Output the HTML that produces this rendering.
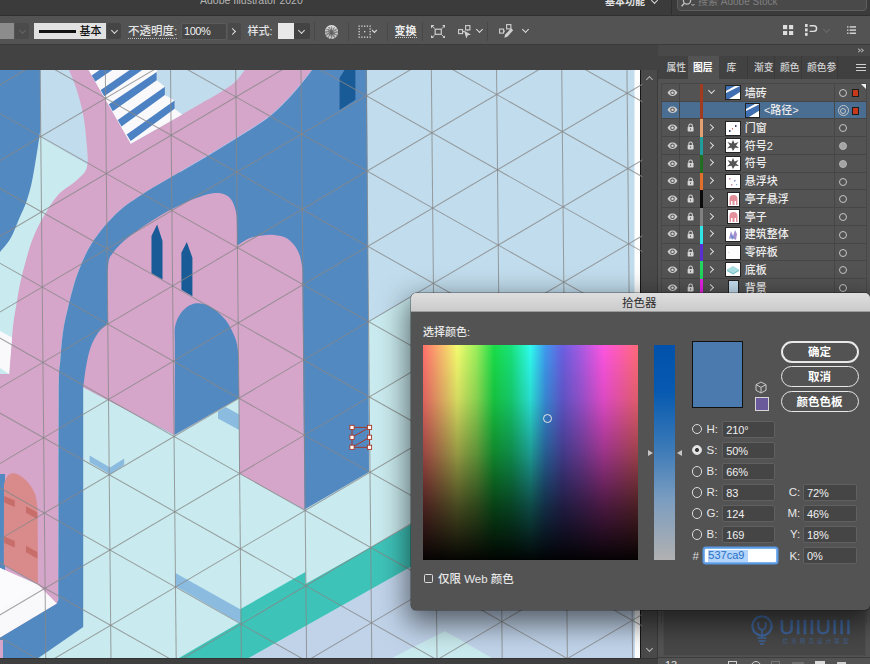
<!DOCTYPE html><html lang="zh"><head><meta charset="utf-8"><title>拾色器</title><style>
*{box-sizing:border-box}
html,body{margin:0;padding:0}
body{width:870px;height:664px;overflow:hidden;position:relative;background:#535353;font-family:"Liberation Sans", "Noto Sans CJK SC", sans-serif;font-size:11px;color:#e6e6e6}
.abs{position:absolute}
.t{position:absolute;white-space:nowrap;line-height:1}
#title{left:0;top:0;width:870px;height:16px;background:#3b3b3b;border-bottom:1px solid #303030;overflow:hidden}
#ctrl{left:0;top:16px;width:870px;height:28px;background:#535353}
#tabs{left:0;top:44px;width:870px;height:26px;background:#424242;border-top:1px solid #3a3a3a}
.sep{position:absolute;top:21px;width:1px;height:19px;background:#484848}
.dd{position:absolute;background:#454545;border-radius:2px}
.chev{position:absolute;width:5px;height:5px;border-right:1.3px solid #ddd;border-bottom:1.3px solid #ddd;transform:rotate(45deg)}
.chevr{position:absolute;width:5px;height:5px;border-right:1.3px solid #ddd;border-top:1.3px solid #ddd;transform:rotate(45deg)}
#panel{left:658px;top:44px;width:212px;height:620px;background:#535353}
.row{position:absolute;left:4.4px;width:204px;height:17.73px;border-bottom:1px solid #464646}
.row .nm{position:absolute;top:2.5px;font-size:11px;line-height:13px;color:#ececec;white-space:nowrap;font-weight:500}
.cbar{position:absolute;left:37.8px;top:0;width:3.1px;height:17.73px}
.thumb{position:absolute;top:1.2px;width:15.5px;height:15px;background:#fff;border:1px solid #222;overflow:hidden}
.circ{position:absolute;left:177px;top:5px;width:8px;height:8px;border:1px solid #c6c6c6;border-radius:50%}
#dlg{left:410.5px;top:293px;width:459px;height:316.5px;background:#535353;border-radius:5px;box-shadow:0 10px 28px 4px rgba(0,0,0,.55),0 0 0 .5px rgba(0,0,0,.5);overflow:hidden}
#dlgt{left:0;top:0;width:100%;height:18.5px;background:linear-gradient(#dedede,#cbcbcb);border-bottom:1px solid #9c9c9c}
.inp{position:absolute;background:#454545;border:1px solid #606060;border-radius:2px;height:16.5px}
.inp span{position:absolute;left:3.2px;top:1.5px;font-size:11px;letter-spacing:-.1px;line-height:12px;color:#f0f0f0}
.lab{position:absolute;font-size:11.5px;line-height:12px;color:#e8e8e8;white-space:nowrap;font-weight:500}
.radio{position:absolute;width:10.5px;height:10.5px;border-radius:50%;border:1.2px solid #dcdcdc}
.btn{position:absolute;left:370px;width:78px;height:22px;border-radius:11px;border:1.2px solid #e8e8e8;color:#fff;font-weight:bold;font-size:11.5px;line-height:19px;text-align:center}
</style></head><body><div id="title" class="abs"><div class="t" style="left:200px;top:-5.5px;font-size:10.5px;color:#b4b4b4">Adobe Illustrator 2020</div><div class="t" style="left:605px;top:-3.500px;font-size:10px;color:#e2e2e2;font-weight:bold">基本功能</div><div class="chev" style="left:652px;top:-2.5px"></div><div class="abs" style="left:670.5px;top:0;width:1px;height:15px;background:#2f2f2f"></div><div class="abs" style="left:676.7px;top:-10px;width:190px;height:20.5px;background:#494949;border:1px solid #5e5e5e;border-radius:4px"></div><svg class="abs" style="left:680px;top:-3.500px" width="16" height="12" viewBox="0 0 16 12"><circle cx="7" cy="3.5" r="3.6" fill="none" stroke="#bdbdbd" stroke-width="1.3"/><path d="M4.4,6.2 L1.5,9.3" stroke="#bdbdbd" stroke-width="1.5"/><path d="M11.5,7 l1.5,1.6 l1.5,-1.6" fill="none" stroke="#bdbdbd" stroke-width="1"/></svg><div class="t" style="left:698px;top:-3px;font-size:10px;color:#808080">搜索 Adobe Stock</div></div><div id="ctrl" class="abs"><div class="abs" style="left:0;top:1px;width:870px;height:27px"><div class="abs" style="left:0;top:6px;width:13.5px;height:16px;background:#8c8c8c"></div><div class="dd" style="left:15px;top:6px;width:14px;height:16px;background:#4b4b4b"></div><div class="chev" style="left:19.5px;top:10.5px;border-color:#666"></div><div class="abs" style="left:33.5px;top:6.3px;width:72.5px;height:16px;background:#e1e1e1"></div><div class="abs" style="left:38.5px;top:13.3px;width:37px;height:2.6px;background:#111"></div><div class="t" style="left:79.500px;top:8.5px;font-size:11px;font-weight:500;color:#111">基本</div><div class="dd" style="left:107px;top:6.3px;width:14px;height:16px"></div><div class="chev" style="left:111.5px;top:10.5px"></div><div class="t" style="left:128px;top:9px;font-size:11.5px;font-weight:500;color:#e4e4e4;border-bottom:1px dotted #bbb;padding-bottom:.5px">不透明度:</div><div class="dd" style="left:180.500px;top:6px;width:46px;height:17px;background:#464646;border:1px solid #5b5b5b"></div><div class="t" style="left:184px;top:8.500px;font-size:11px;color:#f0f0f0;letter-spacing:-.45px">100%</div><div class="dd" style="left:227.5px;top:6px;width:13.5px;height:17px;background:#494949"></div><div class="chevr" style="left:229.5px;top:11.5px"></div><div class="t" style="left:247.500px;top:8.500px;font-size:11px;font-weight:500;color:#e4e4e4">样式:</div><div class="abs" style="left:277.5px;top:6.3px;width:16px;height:16px;background:#e8e8e8"></div><div class="dd" style="left:294px;top:6.3px;width:15.500px;height:16px;background:#434343"></div><div class="chev" style="left:298.500px;top:10.5px"></div><div class="sep" style="left:314px;top:5px"></div><div class="sep" style="left:347.5px;top:5px"></div><div class="sep" style="left:387px;top:5px"></div><div class="sep" style="left:422px;top:5px"></div><div class="sep" style="left:487px;top:5px"></div><div class="abs" style="left:324.5px;top:8.200px;width:13.600px;height:13.600px;border-radius:50%;background:radial-gradient(circle at 50% 55%,rgba(90,90,90,.85) 0 1.5px,rgba(110,110,110,.35) 3.500px,rgba(220,220,220,.15) 6px,rgba(235,235,235,.9) 6.800px),repeating-conic-gradient(from 10deg,#cfcfcf 0 14deg,#8b8b8b 14deg 30deg)"></div><svg class="abs" style="left:357.5px;top:8px" width="22" height="13" viewBox="0 0 22 13"><g fill="#d8d8d8"><rect x="0.5" y="0.5" width="1.3" height="1.3"/><rect x="0.5" y="3.25" width="1.3" height="1.3"/><rect x="0.5" y="6" width="1.3" height="1.3"/><rect x="0.5" y="8.75" width="1.3" height="1.3"/><rect x="0.5" y="11.5" width="1.3" height="1.3"/><rect x="3.25" y="0.5" width="1.3" height="1.3"/><rect x="3.25" y="11.5" width="1.3" height="1.3"/><rect x="6" y="0.5" width="1.3" height="1.3"/><rect x="6" y="6" width="1.3" height="1.3"/><rect x="6" y="11.5" width="1.3" height="1.3"/><rect x="8.75" y="0.5" width="1.3" height="1.3"/><rect x="8.75" y="11.5" width="1.3" height="1.3"/><rect x="11.5" y="0.5" width="1.3" height="1.3"/><rect x="11.5" y="3.25" width="1.3" height="1.3"/><rect x="11.5" y="6" width="1.3" height="1.3"/><rect x="11.5" y="8.75" width="1.3" height="1.3"/><rect x="11.5" y="11.5" width="1.3" height="1.3"/></g><path d="M14,5 l2.4,2.500 l2.400,-2.500" fill="none" stroke="#d8d8d8" stroke-width="1.1"/></svg><div class="t" style="left:394.5px;top:9px;font-size:11px;color:#ececec;font-weight:bold;border-bottom:1px dotted #ccc;padding-bottom:0">变换</div><svg class="abs" style="left:430.500px;top:7.500px" width="14.500" height="13.500" viewBox="0 0 14.500 13.500"><g fill="none" stroke="#cfcfcf" stroke-width="1.2"><rect x="4.200" y="4.200" width="6.100" height="5.100"/><path d="M1,1 L3.600,3.400 M13.500,1 L10.900,3.400 M1,12.500 L3.600,10.100 M13.500,12.500 L10.900,10.100" stroke-width="1"/></g><g fill="#cfcfcf"><path d="M0,0 H3.400 L0,3.400 Z M14.500,0 V3.400 L11.100,0 Z M0,13.500 V10.100 L3.400,13.500 Z M14.500,13.500 H11.100 L14.500,10.100 Z"/></g></svg><svg class="abs" style="left:457.5px;top:7.500px" width="15" height="14" viewBox="0 0 15 14"><g fill="none" stroke="#cfcfcf" stroke-width="1.1"><rect x="0.600" y="4.600" width="4" height="4"/><rect x="7.600" y="0.600" width="4.300" height="4.300"/><path d="M4.600,6.600 H6.500 M9.700,5 V6"/></g><path d="M6,5.500 L13,9.800 L9.800,10.300 L8.300,13.400 Z" fill="#cfcfcf"/></svg><div class="chev" style="left:476.5px;top:10px"></div><svg class="abs" style="left:499px;top:7px" width="15" height="15" viewBox="0 0 15 15"><g fill="none" stroke="#cfcfcf" stroke-width="1.1"><rect x="0.600" y="5.100" width="4" height="4"/><rect x="7.600" y="0.600" width="4.300" height="4.300"/><path d="M4.600,7.100 H6"/></g><path d="M5.300,13.800 L6.200,10.600 L12,4.300 L14.200,6.300 L8.400,12.700 Z" fill="#cfcfcf"/></svg><div class="chev" style="left:522.5px;top:10px"></div><svg class="abs" style="left:783.300px;top:7.800px" width="10.700" height="10.700" viewBox="0 0 11 11"><g fill="#dedede"><rect x="0" y="0" width="4.300" height="4.300"/><rect x="6.200" y="0" width="4.300" height="4.300"/><rect x="0" y="6.200" width="4.300" height="4.300"/><rect x="6.200" y="6.200" width="4.300" height="4.300"/></g></svg><svg class="abs" style="left:804.800px;top:7.200px" width="13" height="12" viewBox="0 0 14 13"><g fill="#dedede"><rect x="0" y="0" width="2.800" height="3.200"/><rect x="0" y="4.800" width="2.800" height="3.200"/><rect x="0" y="9.600" width="2.800" height="3.200"/></g><path d="M5,2 H9.500 A2.800,2.800 0 0 1 9.500,8 H5" fill="none" stroke="#dedede" stroke-width="1.600"/></svg><div class="chev" style="left:823.5px;top:9.500px;border-color:#6c6c6c"></div><svg class="abs" style="left:846.500px;top:9.200px" width="9.500" height="8.500" viewBox="0 0 11 10"><g fill="#dedede"><rect x="0" y="0.300" width="1.600" height="1.600"/><rect x="3" y="0.300" width="8" height="1.600"/><rect x="0" y="4" width="1.600" height="1.600"/><rect x="3" y="4" width="8" height="1.600"/><rect x="0" y="7.700" width="1.600" height="1.600"/><rect x="3" y="7.700" width="8" height="1.600"/></g></svg></div></div><div id="tabs" class="abs"></div><div class="abs" style="left:640px;top:70px;width:18.500px;height:588px;background:#4a4a4a;border-left:1.500px solid #161616;border-right:2.500px solid #3b3b3b"></div><div class="chev" style="left:647px;top:76.500px;transform:rotate(-135deg);border-color:#b0b0b0"></div><div class="chev" style="left:647px;top:645.500px;border-color:#bdbdbd"></div><svg class="abs" style="left:0;top:0" width="870" height="664" viewBox="0 0 870 664"><defs><clipPath id="cv"><rect x="0" y="70" width="642.500" height="588"/></clipPath><clipPath id="gridclip"><rect x="-20" y="60" width="663" height="610"/></clipPath></defs><g clip-path="url(#cv)"><rect x="0" y="70" width="635" height="588" fill="#c1dcec"/>
<rect x="634.5" y="70" width="5.5" height="588" fill="#fdfdfd"/>
<polygon points="0.0,114.0 87.0,164.5 83.0,380.0 367.5,380.0 367.5,322.8 412.0,297.0 412.0,300.0 634.5,300.0 634.5,658.0 0.0,658.0" fill="#c9eaee" />
<polygon points="248.7,658.0 634.5,441.0 634.5,658.0" fill="#c0d3e9" />
<polygon points="392.0,658.0 445.0,631.0 492.0,658.0" fill="#c9eaee" />
<polygon points="179.0,658.0 305.5,584.0 410.5,524.7 634.5,397.0 634.5,441.0 248.7,658.0" fill="#3ec3b9" />
<polygon points="240.2,609.2 305.5,572.0 305.5,585.0 240.2,622.5" fill="#3ec3b9" />
<polygon points="175.4,572.9 240.2,609.2 240.2,623.3 175.4,586.0" fill="#8bbce0" />
<path d="M0.0,70.0L40.3,70.0 L40.3,130.0 C39.9,132.7 39.3,137.9 38.0,146.0 C36.7,154.1 34.3,169.8 32.5,178.8 C30.7,187.8 29.2,193.3 27.0,200.0 C24.8,206.7 21.7,212.7 19.0,219.0 C16.3,225.3 14.0,232.5 10.8,238.0 C7.6,243.5 1.8,249.7 0.0,252.0 Z" fill="#5389c1"/>
<path d="M69.0,70.0 C70.2,73.1 74.0,81.3 76.3,88.4 C78.6,95.5 81.2,104.7 82.8,112.8 C84.4,120.9 85.3,128.1 86.0,137.0 C86.7,145.9 88.7,158.8 87.2,166.0 C85.7,173.2 81.9,175.2 77.0,180.0 C72.1,184.8 63.6,188.9 58.0,195.0 C52.4,201.1 47.7,209.5 43.5,216.7 C39.3,223.9 36.0,230.4 33.0,238.0 C30.0,245.6 27.7,254.3 25.5,262.0 C23.3,269.7 21.5,277.0 20.0,284.0 C18.5,291.0 17.6,297.6 16.5,304.0 C15.4,310.4 14.2,317.0 13.5,322.6 C12.8,328.2 12.6,331.5 12.0,337.7 C11.4,343.9 10.5,353.9 10.0,360.0 C9.5,366.1 9.2,371.7 9.0,374.0L0.0,374.0 L0.0,636.0 L58.4,636.0L58.4,600.0 C58.5,566.7 58.4,440.0 58.7,400.0 C59.0,360.0 59.5,371.7 60.3,360.0 C61.1,348.3 62.1,338.3 63.3,330.0 C64.5,321.7 66.1,316.2 67.5,310.0 C68.9,303.8 70.0,299.1 71.8,292.6 C73.6,286.1 75.2,279.3 78.6,271.0 C82.0,262.7 85.8,252.4 92.0,243.0 C98.2,233.6 107.4,222.3 115.6,214.3 C123.8,206.3 130.5,202.1 141.2,195.0 C151.9,187.9 169.0,178.4 179.8,172.0 C190.6,165.6 196.6,162.2 205.8,156.7 C215.0,151.2 224.7,145.3 235.0,138.8 C245.3,132.3 258.9,124.2 267.6,117.7 C276.3,111.2 281.6,105.2 287.0,99.8 C292.4,94.3 296.2,89.5 300.0,85.0 C303.8,80.5 307.9,75.0 310.0,72.5 C312.1,70.0 312.2,70.4 312.7,70.0L244.8,70.0 C243.2,72.0 239.3,78.0 235.0,81.9 C230.7,85.8 224.6,89.6 218.8,93.3 C213.0,97.0 206.1,100.5 200.0,104.0 C193.9,107.5 185.2,112.7 182.2,114.4L130.7,143.7 L100.0,70.0 Z" fill="#d5a6ca"/>
<path d="M312.7,70.0 C312.2,70.4 312.1,70.0 310.0,72.5 C307.9,75.0 303.8,80.5 300.0,85.0 C296.2,89.5 292.4,94.3 287.0,99.8 C281.6,105.2 276.3,111.2 267.6,117.7 C258.9,124.2 245.3,132.3 235.0,138.8 C224.7,145.3 215.0,151.2 205.8,156.7 C196.6,162.2 190.6,165.6 179.8,172.0 C169.0,178.4 151.9,187.9 141.2,195.0 C130.5,202.1 123.8,206.3 115.6,214.3 C107.4,222.3 98.2,233.6 92.0,243.0 C85.8,252.4 82.0,262.7 78.6,271.0 C75.2,279.3 73.6,286.1 71.8,292.6 C70.0,299.1 68.9,303.8 67.5,310.0 C66.1,316.2 64.5,321.7 63.3,330.0 C62.1,338.3 61.1,348.3 60.3,360.0 C59.5,371.7 59.0,360.0 58.7,400.0 C58.4,440.0 58.5,566.7 58.4,600.0L56.8,603.6 L0.0,637.4 L0.0,658.0 L38.4,658.0 L83.2,627.0 L83.2,387.0 L174.6,435.0 L304.5,509.5 L369.0,472.0 L367.0,70.0 Z" fill="#5389c1"/>
<path d="M310.0,72.5 C308.3,74.6 303.8,80.5 300.0,85.0 C296.2,89.5 292.4,94.3 287.0,99.8 C281.6,105.2 276.3,111.2 267.6,117.7 C258.9,124.2 245.3,132.3 235.0,138.8 C224.7,145.3 215.0,151.2 205.8,156.7 C196.6,162.2 184.1,169.4 179.8,172.0" fill="none" stroke="#bcc6ee" stroke-width="0.9" opacity="0.8"/>
<path d="M108.0,322.0 C108.0,313.0 107.2,279.6 108.0,268.0 C108.8,256.4 109.6,257.8 113.0,252.7 C116.4,247.6 121.6,242.9 128.4,237.3 C135.2,231.8 145.5,224.7 154.0,219.4 C162.5,214.1 171.1,209.4 179.6,205.3 C188.1,201.2 198.4,197.0 205.2,195.0 C212.0,193.0 216.3,192.7 220.6,193.3 C224.9,194.0 228.2,195.8 230.8,198.9 C233.4,202.0 235.0,207.5 236.0,212.0 C237.0,216.5 236.8,220.5 236.9,226.0 C237.1,231.5 236.9,241.8 236.9,245.0L237.3,245.6 C239.2,244.4 244.7,240.3 248.8,238.6 C252.9,236.9 257.8,236.2 262.0,235.6 C266.2,235.0 269.8,234.5 274.0,235.0 C278.2,235.5 283.3,236.1 287.2,238.6 C291.1,241.1 294.9,245.4 297.4,250.0 C299.9,254.6 301.2,260.2 302.0,266.0 C302.8,271.8 302.3,281.8 302.4,285.0L304.5,509.5 L239.2,473.5 L239.2,398.0 L174.6,435.0 L83.3,387.4 C83.7,384.1 84.7,374.4 85.9,367.8 C87.1,361.2 88.4,353.8 90.4,348.0 C92.4,342.2 95.2,337.0 98.0,333.0 C100.8,329.0 105.6,325.8 107.3,324.0 C109.0,322.2 107.9,322.3 108.0,322.0 Z" fill="#d5a6ca"/>
<path d="M174.6,435.0L174.9,340.0 C174.9,337.8 174.3,331.1 175.0,327.0 C175.7,322.9 177.3,318.8 179.3,315.5 C181.3,312.2 184.1,309.0 187.0,307.0 C189.9,305.0 193.2,303.4 197.0,303.3 C200.8,303.2 205.2,303.7 210.0,306.5 C214.8,309.3 221.3,314.4 225.6,320.0 C229.9,325.6 233.8,333.7 235.9,340.0 C238.0,346.3 237.9,352.2 238.4,358.0 C238.9,363.8 238.6,372.2 238.7,375.0L239.2,398.0 Z" fill="#5389c1"/>
<polygon points="174.6,435.0 239.2,398.0 239.2,474.0 174.6,438.0" fill="#c9eaee" />
<polygon points="339.6,78.0 344.5,70.0 355.4,70.0 355.4,99.7 339.6,110.0" fill="#195b96" />
<polygon points="157.1,224.5 162.5,241.0 162.5,279.6 151.5,273.2 151.5,236.0" fill="#195b96" />
<polygon points="186.8,241.9 192.4,257.8 192.4,296.2 181.4,289.8 181.4,252.7" fill="#195b96" />
<polygon points="88.5,70.0 157.0,70.0 156.7,80.3 164.9,86.8 164.9,94.9 174.6,100.6 174.6,108.7 182.2,114.4 130.7,143.7" fill="#f9f9fc" />
<polygon points="91.7,75.4 99.5,70.0 112.2,70.0 95.4,81.6" fill="#4c82c3" />
<polygon points="100.7,90.0 129.7,70.0 142.2,70.0 104.2,96.2" fill="#4c82c3" />
<polygon points="108.8,104.3 156.7,72.1 156.7,80.3 112.8,111.2" fill="#4c82c3" />
<polygon points="117.7,120.1 164.9,86.8 164.9,94.9 121.5,126.6" fill="#4c82c3" />
<polygon points="126.7,134.6 174.6,100.6 174.6,108.7 130.7,141.0" fill="#4c82c3" />
<polygon points="0.0,331.0 12.0,337.5 9.2,374.0 0.0,368.0" fill="#f9f9fc" />
<polygon points="89.6,455.5 110.0,467.5 124.2,458.5 124.2,465.0 110.0,474.3 89.6,462.3" fill="#8bbce0" />
<polygon points="218.0,411.5 225.6,407.0 239.2,414.5 239.2,430.0 218.0,418.4" fill="#8bbce0" />
<rect x="0" y="474" width="5" height="100" fill="#5389c1"/>
<path d="M3.8,564.4L4.0,495.0 C4.1,492.8 3.5,485.5 4.5,482.0 C5.5,478.5 7.8,475.2 10.0,474.0 C12.2,472.8 15.0,473.1 18.0,474.5 C21.0,475.9 25.2,479.1 28.0,482.4 C30.8,485.6 33.4,489.7 35.0,494.0 C36.6,498.3 37.2,505.7 37.6,508.0L37.9,583.6 Z" fill="#d98b8c"/>
<polygon points="4.2,496.0 14.8,500.6 14.8,507.1 4.2,502.5" fill="#c86e6a" />
<polygon points="26.0,506.3 37.3,512.5 37.3,519.0 26.0,512.8" fill="#c86e6a" />
<polygon points="4.2,536.5 14.8,541.0 14.8,547.5 4.2,543.0" fill="#c86e6a" />
<polygon points="26.0,545.8 37.3,552.0 37.3,558.5 26.0,552.3" fill="#c86e6a" />
<polygon points="0.0,568.0 38.0,584.5 56.8,603.6 0.0,637.4" fill="#f9f9fc" />
<polygon points="0.0,568.0 38.0,586.0 0.0,610.0" fill="#fbfbfd" />
<rect x="0" y="640" width="3" height="18" fill="#d5a6ca"/>
<g stroke="#878787" stroke-opacity=".78" stroke-width="1" fill="none" transform="rotate(-0.55 236 97)" clip-path="url(#gridclip)"><line x1="-24.80" y1="-50" x2="-24.80" y2="800"/><line x1="40.40" y1="-50" x2="40.40" y2="800"/><line x1="105.60" y1="-50" x2="105.60" y2="800"/><line x1="170.80" y1="-50" x2="170.80" y2="800"/><line x1="236.00" y1="-50" x2="236.00" y2="800"/><line x1="301.20" y1="-50" x2="301.20" y2="800"/><line x1="366.40" y1="-50" x2="366.40" y2="800"/><line x1="431.60" y1="-50" x2="431.60" y2="800"/><line x1="496.80" y1="-50" x2="496.80" y2="800"/><line x1="562.00" y1="-50" x2="562.00" y2="800"/><line x1="627.20" y1="-50" x2="627.20" y2="800"/><line x1="692.40" y1="-50" x2="692.40" y2="800"/><line x1="-300" y1="-1116.12" x2="700" y2="-538.66"/><line x1="-300" y1="-497.08" x2="700" y2="-1074.54"/><line x1="-300" y1="-1040.82" x2="700" y2="-463.36"/><line x1="-300" y1="-421.78" x2="700" y2="-999.24"/><line x1="-300" y1="-965.52" x2="700" y2="-388.06"/><line x1="-300" y1="-346.48" x2="700" y2="-923.94"/><line x1="-300" y1="-890.22" x2="700" y2="-312.76"/><line x1="-300" y1="-271.18" x2="700" y2="-848.64"/><line x1="-300" y1="-814.92" x2="700" y2="-237.46"/><line x1="-300" y1="-195.88" x2="700" y2="-773.34"/><line x1="-300" y1="-739.62" x2="700" y2="-162.16"/><line x1="-300" y1="-120.58" x2="700" y2="-698.04"/><line x1="-300" y1="-664.32" x2="700" y2="-86.86"/><line x1="-300" y1="-45.28" x2="700" y2="-622.74"/><line x1="-300" y1="-589.02" x2="700" y2="-11.56"/><line x1="-300" y1="30.02" x2="700" y2="-547.44"/><line x1="-300" y1="-513.72" x2="700" y2="63.74"/><line x1="-300" y1="105.32" x2="700" y2="-472.14"/><line x1="-300" y1="-438.42" x2="700" y2="139.04"/><line x1="-300" y1="180.62" x2="700" y2="-396.84"/><line x1="-300" y1="-363.12" x2="700" y2="214.34"/><line x1="-300" y1="255.92" x2="700" y2="-321.54"/><line x1="-300" y1="-287.82" x2="700" y2="289.64"/><line x1="-300" y1="331.22" x2="700" y2="-246.24"/><line x1="-300" y1="-212.52" x2="700" y2="364.94"/><line x1="-300" y1="406.52" x2="700" y2="-170.94"/><line x1="-300" y1="-137.22" x2="700" y2="440.24"/><line x1="-300" y1="481.82" x2="700" y2="-95.64"/><line x1="-300" y1="-61.92" x2="700" y2="515.54"/><line x1="-300" y1="557.12" x2="700" y2="-20.34"/><line x1="-300" y1="13.38" x2="700" y2="590.84"/><line x1="-300" y1="632.42" x2="700" y2="54.96"/><line x1="-300" y1="88.68" x2="700" y2="666.14"/><line x1="-300" y1="707.72" x2="700" y2="130.26"/><line x1="-300" y1="163.98" x2="700" y2="741.44"/><line x1="-300" y1="783.02" x2="700" y2="205.56"/><line x1="-300" y1="239.28" x2="700" y2="816.74"/><line x1="-300" y1="858.32" x2="700" y2="280.86"/><line x1="-300" y1="314.58" x2="700" y2="892.04"/><line x1="-300" y1="933.62" x2="700" y2="356.16"/><line x1="-300" y1="389.88" x2="700" y2="967.34"/><line x1="-300" y1="1008.92" x2="700" y2="431.46"/><line x1="-300" y1="465.18" x2="700" y2="1042.64"/><line x1="-300" y1="1084.22" x2="700" y2="506.76"/><line x1="-300" y1="540.48" x2="700" y2="1117.94"/><line x1="-300" y1="1159.52" x2="700" y2="582.06"/><line x1="-300" y1="615.78" x2="700" y2="1193.24"/><line x1="-300" y1="1234.82" x2="700" y2="657.36"/><line x1="-300" y1="691.08" x2="700" y2="1268.54"/><line x1="-300" y1="1310.12" x2="700" y2="732.66"/><line x1="-300" y1="766.38" x2="700" y2="1343.84"/><line x1="-300" y1="1385.42" x2="700" y2="807.96"/><line x1="-300" y1="841.68" x2="700" y2="1419.14"/><line x1="-300" y1="1460.72" x2="700" y2="883.26"/><line x1="-300" y1="916.98" x2="700" y2="1494.44"/><line x1="-300" y1="1536.02" x2="700" y2="958.56"/></g>
<g stroke="#a3392b" stroke-width="1" fill="none"><rect x="352" y="427.4" width="17.5" height="19.9"/><path d="M352,437.2 L369.5,427.4 M352,447.3 L369.5,437.4"/></g>
<rect x="349.9" y="425.3" width="4.2" height="4.2" fill="#fff" stroke="#a3392b" stroke-width=".9"/><rect x="349.9" y="435.2" width="4.2" height="4.2" fill="#fff" stroke="#a3392b" stroke-width=".9"/><rect x="349.9" y="445.2" width="4.2" height="4.2" fill="#fff" stroke="#a3392b" stroke-width=".9"/><rect x="367.4" y="425.3" width="4.2" height="4.2" fill="#fff" stroke="#a3392b" stroke-width=".9"/><rect x="367.4" y="435.2" width="4.2" height="4.2" fill="#fff" stroke="#a3392b" stroke-width=".9"/><rect x="367.4" y="445.2" width="4.2" height="4.2" fill="#fff" stroke="#a3392b" stroke-width=".9"/></g></svg><div class="abs" style="left:0;top:658px;width:658px;height:6px;background:#3f3f3f;border-top:1px solid #333"></div><div id="panel" class="abs"><div class="abs" style="left:0;top:0;width:212px;height:11.500px;background:#494949;border-top:1px solid #3a3a3a"></div><div class="chevr" style="left:198.500px;top:4.500px;width:3.200px;height:3.200px;border-width:1px;border-color:#b0b0b0"></div><div class="chevr" style="left:202px;top:4.500px;width:3.200px;height:3.200px;border-width:1px;border-color:#b0b0b0"></div><div class="abs" style="left:0;top:11.500px;width:212px;height:23.500px;background:#424242"></div><div class="abs" style="left:29.500px;top:11.500px;width:31px;height:23.500px;background:#535353"></div><div class="t" style="left:8.5px;top:19px;font-size:9.800px;color:#d2d2d2;font-weight:500;">属性</div><div class="t" style="left:35px;top:19px;font-size:9.800px;color:#fff;font-weight:bold;">图层</div><div class="t" style="left:68.5px;top:19px;font-size:9.800px;color:#d2d2d2;font-weight:500;">库</div><div class="t" style="left:96px;top:19px;font-size:9.800px;color:#d2d2d2;font-weight:500;">渐变</div><div class="t" style="left:122px;top:19px;font-size:9.800px;color:#d2d2d2;font-weight:500;">颜色</div><div class="t" style="left:149px;top:19px;font-size:9.800px;color:#d2d2d2;font-weight:500;">颜色参</div><div class="abs" style="left:89px;top:12px;width:1px;height:22.500px;background:#393939"></div><div class="abs" style="left:116px;top:12px;width:1px;height:22.500px;background:#393939"></div><div class="abs" style="left:143px;top:12px;width:1px;height:22.500px;background:#393939"></div><div class="abs" style="left:178.500px;top:12px;width:34px;height:22.500px;background:#404040;border-left:1px solid #393939"></div><div class="abs" style="left:198px;top:19.7px;width:9.5px;height:1.3px;background:#d0d0d0"></div><div class="abs" style="left:198px;top:22.9px;width:9.5px;height:1.3px;background:#d0d0d0"></div><div class="abs" style="left:198px;top:26.1px;width:9.5px;height:1.3px;background:#d0d0d0"></div><div class="abs" style="left:3.4px;top:39.0px;width:205.5px;height:540px;border:1px solid #484848;border-bottom:none"></div><div class="row" style="top:40.00px;"><svg class="abs" style="left:4.6px;top:4.6px" width="11" height="7.600" viewBox="0 0 13 9"><path d="M0.6,4.5 C2.6,1.2 4.6,0.7 6.5,0.7 C8.4,0.7 10.4,1.2 12.4,4.5 C10.4,7.8 8.4,8.3 6.5,8.3 C4.6,8.3 2.6,7.8 0.6,4.5 Z" fill="#cdcdcd"/><circle cx="6.5" cy="4.5" r="2.7" fill="#535353"/><circle cx="6.5" cy="4.5" r="1.5" fill="#d6d6d6"/></svg><div class="abs" style="left:17px;top:0;width:1px;height:17.73px;background:#454545"></div><div class="cbar" style="background:#a13a1f"></div><div class="chev" style="left:47px;top:3.5px;border-color:#dcdcdc"></div><div class="thumb" style="left:63px;width:15.5px"><svg width="14" height="13" viewBox="0 0 14 13"><rect width="14" height="13" fill="#fff"/><polygon points="0,13 0,7 14,0 14,6 3,13" fill="#3f6fb0"/><polygon points="0,0 9,0 0,5" fill="#3f6fb0"/></svg></div><div class="nm" style="left:82.3px">墙砖</div><div class="abs" style="left:171.5px;top:0;width:1px;height:17.73px;background:#474747"></div><div class="circ"></div><div class="abs" style="left:189.5px;top:5.2px;width:7.600px;height:7.600px;background:#c8381a;border:1px solid #1c1c1c"></div><div class="abs" style="left:199px;top:0;width:0;height:0;border-left:5px solid transparent;border-top:5px solid #f0f0f0"></div></div><div class="row" style="top:57.73px;background:#4a6d92;"><svg class="abs" style="left:4.6px;top:4.6px" width="11" height="7.600" viewBox="0 0 13 9"><path d="M0.6,4.5 C2.6,1.2 4.6,0.7 6.5,0.7 C8.4,0.7 10.4,1.2 12.4,4.5 C10.4,7.8 8.4,8.3 6.5,8.3 C4.6,8.3 2.6,7.8 0.6,4.5 Z" fill="#cdcdcd"/><circle cx="6.5" cy="4.5" r="2.7" fill="#535353"/><circle cx="6.5" cy="4.5" r="1.5" fill="#d6d6d6"/></svg><div class="abs" style="left:17px;top:0;width:1px;height:17.73px;background:#454545"></div><div class="cbar" style="background:#a13a1f"></div><div class="thumb" style="left:82.6px;width:15.5px"><svg width="14" height="13" viewBox="0 0 14 13"><rect width="14" height="13" fill="#fff"/><polygon points="0,13 0,7 14,0 14,6 3,13" fill="#3f6fb0"/><polygon points="0,0 9,0 0,5" fill="#3f6fb0"/></svg></div><div class="nm" style="left:101.5px">&lt;路径&gt;</div><div class="abs" style="left:171.5px;top:0;width:1px;height:17.73px;background:#474747"></div><div class="circ" style="left:175.500px;top:3.500px;width:11px;height:11px"></div><div class="circ" style="left:178px;top:6px;width:6px;height:6px"></div><div class="abs" style="left:189.5px;top:5.2px;width:7.600px;height:7.600px;background:#c8381a;border:1px solid #1c1c1c"></div></div><div class="row" style="top:75.46px;"><svg class="abs" style="left:4.6px;top:4.6px" width="11" height="7.600" viewBox="0 0 13 9"><path d="M0.6,4.5 C2.6,1.2 4.6,0.7 6.5,0.7 C8.4,0.7 10.4,1.2 12.4,4.5 C10.4,7.8 8.4,8.3 6.5,8.3 C4.6,8.3 2.6,7.8 0.6,4.5 Z" fill="#cdcdcd"/><circle cx="6.5" cy="4.5" r="2.7" fill="#535353"/><circle cx="6.5" cy="4.5" r="1.5" fill="#d6d6d6"/></svg><div class="abs" style="left:17px;top:0;width:1px;height:17.73px;background:#454545"></div><svg class="abs" style="left:24.6px;top:4px" width="7.200" height="9" viewBox="0 0 9 11"><path d="M2.3,5 V3.2 A2.2,2.2 0 0 1 6.7,3.2 V5" fill="none" stroke="#d6d6d6" stroke-width="1.3"/><rect x="0.8" y="4.8" width="7.4" height="5.6" rx="0.8" fill="#d6d6d6"/><rect x="4" y="6.5" width="1" height="2.2" fill="#535353"/></svg><div class="cbar" style="background:#e3a173"></div><div class="chevr" style="left:45.5px;top:5.5px;border-color:#dcdcdc"></div><div class="thumb" style="left:63px;width:15.5px"><svg width="14" height="13" viewBox="0 0 14 13"><rect width="14" height="13" fill="#fff"/><rect x="3" y="8" width="1.5" height="2" fill="#447"/><rect x="9" y="3" width="1.5" height="2" fill="#447"/><rect x="6" y="6" width="1" height="1.5" fill="#c66"/></svg></div><div class="nm" style="left:82.3px">门窗</div><div class="abs" style="left:171.5px;top:0;width:1px;height:17.73px;background:#474747"></div><div class="circ"></div></div><div class="row" style="top:93.19px;"><svg class="abs" style="left:4.6px;top:4.6px" width="11" height="7.600" viewBox="0 0 13 9"><path d="M0.6,4.5 C2.6,1.2 4.6,0.7 6.5,0.7 C8.4,0.7 10.4,1.2 12.4,4.5 C10.4,7.8 8.4,8.3 6.5,8.3 C4.6,8.3 2.6,7.8 0.6,4.5 Z" fill="#cdcdcd"/><circle cx="6.5" cy="4.5" r="2.7" fill="#535353"/><circle cx="6.5" cy="4.5" r="1.5" fill="#d6d6d6"/></svg><div class="abs" style="left:17px;top:0;width:1px;height:17.73px;background:#454545"></div><svg class="abs" style="left:24.6px;top:4px" width="7.200" height="9" viewBox="0 0 9 11"><path d="M2.3,5 V3.2 A2.2,2.2 0 0 1 6.7,3.2 V5" fill="none" stroke="#d6d6d6" stroke-width="1.3"/><rect x="0.8" y="4.8" width="7.4" height="5.6" rx="0.8" fill="#d6d6d6"/><rect x="4" y="6.5" width="1" height="2.2" fill="#535353"/></svg><div class="cbar" style="background:#1f9e9e"></div><div class="chevr" style="left:45.5px;top:5.5px;border-color:#dcdcdc"></div><div class="thumb" style="left:63px;width:15.5px"><svg width="14" height="13" viewBox="0 0 14 13"><rect width="14" height="13" fill="#fff"/><path d="M7,1 L8.5,4.5 L12.5,3 L10,6.5 L13,9 L9,8.8 L7,12 L5.4,8.8 L1,9.5 L4,6.5 L1.5,3 L5.5,4.5 Z" fill="#555"/></svg></div><div class="nm" style="left:82.3px">符号2</div><div class="abs" style="left:171.5px;top:0;width:1px;height:17.73px;background:#474747"></div><div class="circ" style="background:#a4a4a4;border-color:#b4b4b4"></div></div><div class="row" style="top:110.92px;"><svg class="abs" style="left:4.6px;top:4.6px" width="11" height="7.600" viewBox="0 0 13 9"><path d="M0.6,4.5 C2.6,1.2 4.6,0.7 6.5,0.7 C8.4,0.7 10.4,1.2 12.4,4.5 C10.4,7.8 8.4,8.3 6.5,8.3 C4.6,8.3 2.6,7.8 0.6,4.5 Z" fill="#cdcdcd"/><circle cx="6.5" cy="4.5" r="2.7" fill="#535353"/><circle cx="6.5" cy="4.5" r="1.5" fill="#d6d6d6"/></svg><div class="abs" style="left:17px;top:0;width:1px;height:17.73px;background:#454545"></div><svg class="abs" style="left:24.6px;top:4px" width="7.200" height="9" viewBox="0 0 9 11"><path d="M2.3,5 V3.2 A2.2,2.2 0 0 1 6.7,3.2 V5" fill="none" stroke="#d6d6d6" stroke-width="1.3"/><rect x="0.8" y="4.8" width="7.4" height="5.6" rx="0.8" fill="#d6d6d6"/><rect x="4" y="6.5" width="1" height="2.2" fill="#535353"/></svg><div class="cbar" style="background:#1f6e22"></div><div class="chevr" style="left:45.5px;top:5.5px;border-color:#dcdcdc"></div><div class="thumb" style="left:63px;width:15.5px"><svg width="14" height="13" viewBox="0 0 14 13"><rect width="14" height="13" fill="#fff"/><path d="M7,1 L8.5,4.5 L12.5,3 L10,6.5 L13,9 L9,8.8 L7,12 L5.4,8.8 L1,9.5 L4,6.5 L1.5,3 L5.5,4.5 Z" fill="#555"/></svg></div><div class="nm" style="left:82.3px">符号</div><div class="abs" style="left:171.5px;top:0;width:1px;height:17.73px;background:#474747"></div><div class="circ" style="background:#a4a4a4;border-color:#b4b4b4"></div></div><div class="row" style="top:128.65px;"><svg class="abs" style="left:4.6px;top:4.6px" width="11" height="7.600" viewBox="0 0 13 9"><path d="M0.6,4.5 C2.6,1.2 4.6,0.7 6.5,0.7 C8.4,0.7 10.4,1.2 12.4,4.5 C10.4,7.8 8.4,8.3 6.5,8.3 C4.6,8.3 2.6,7.8 0.6,4.5 Z" fill="#cdcdcd"/><circle cx="6.5" cy="4.5" r="2.7" fill="#535353"/><circle cx="6.5" cy="4.5" r="1.5" fill="#d6d6d6"/></svg><div class="abs" style="left:17px;top:0;width:1px;height:17.73px;background:#454545"></div><svg class="abs" style="left:24.6px;top:4px" width="7.200" height="9" viewBox="0 0 9 11"><path d="M2.3,5 V3.2 A2.2,2.2 0 0 1 6.7,3.2 V5" fill="none" stroke="#d6d6d6" stroke-width="1.3"/><rect x="0.8" y="4.8" width="7.4" height="5.6" rx="0.8" fill="#d6d6d6"/><rect x="4" y="6.5" width="1" height="2.2" fill="#535353"/></svg><div class="cbar" style="background:#e36f2c"></div><div class="chevr" style="left:45.5px;top:5.5px;border-color:#dcdcdc"></div><div class="thumb" style="left:63px;width:15.5px"><svg width="14" height="13" viewBox="0 0 14 13"><rect width="14" height="13" fill="#fff"/><rect x="3" y="3" width="1.5" height="1.5" fill="#c8a"/><rect x="8" y="5" width="1.5" height="1.5" fill="#88c"/><rect x="5" y="9" width="1.5" height="1.5" fill="#c8a"/><rect x="10" y="9" width="1.2" height="1.2" fill="#8ac"/></svg></div><div class="nm" style="left:82.3px">悬浮块</div><div class="abs" style="left:171.5px;top:0;width:1px;height:17.73px;background:#474747"></div><div class="circ"></div></div><div class="row" style="top:146.38px;"><svg class="abs" style="left:4.6px;top:4.6px" width="11" height="7.600" viewBox="0 0 13 9"><path d="M0.6,4.5 C2.6,1.2 4.6,0.7 6.5,0.7 C8.4,0.7 10.4,1.2 12.4,4.5 C10.4,7.8 8.4,8.3 6.5,8.3 C4.6,8.3 2.6,7.8 0.6,4.5 Z" fill="#cdcdcd"/><circle cx="6.5" cy="4.5" r="2.7" fill="#535353"/><circle cx="6.5" cy="4.5" r="1.5" fill="#d6d6d6"/></svg><div class="abs" style="left:17px;top:0;width:1px;height:17.73px;background:#454545"></div><svg class="abs" style="left:24.6px;top:4px" width="7.200" height="9" viewBox="0 0 9 11"><path d="M2.3,5 V3.2 A2.2,2.2 0 0 1 6.7,3.2 V5" fill="none" stroke="#d6d6d6" stroke-width="1.3"/><rect x="0.8" y="4.8" width="7.4" height="5.6" rx="0.8" fill="#d6d6d6"/><rect x="4" y="6.5" width="1" height="2.2" fill="#535353"/></svg><div class="cbar" style="background:#0a0a0a"></div><div class="chevr" style="left:45.5px;top:5.5px;border-color:#dcdcdc"></div><div class="thumb" style="left:64.25px;width:13px"><svg width="11" height="13" viewBox="1.5 0 11 13"><rect width="14" height="13" fill="#fff"/><path d="M3,12 V6 A4,4 0 0 1 11,6 V12 H9.5 V8 H8 V12 H6 V8 H4.5 V12 Z" fill="#e58f9a"/></svg></div><div class="nm" style="left:82.3px">亭子悬浮</div><div class="abs" style="left:171.5px;top:0;width:1px;height:17.73px;background:#474747"></div><div class="circ"></div></div><div class="row" style="top:164.11px;"><svg class="abs" style="left:4.6px;top:4.6px" width="11" height="7.600" viewBox="0 0 13 9"><path d="M0.6,4.5 C2.6,1.2 4.6,0.7 6.5,0.7 C8.4,0.7 10.4,1.2 12.4,4.5 C10.4,7.8 8.4,8.3 6.5,8.3 C4.6,8.3 2.6,7.8 0.6,4.5 Z" fill="#cdcdcd"/><circle cx="6.5" cy="4.5" r="2.7" fill="#535353"/><circle cx="6.5" cy="4.5" r="1.5" fill="#d6d6d6"/></svg><div class="abs" style="left:17px;top:0;width:1px;height:17.73px;background:#454545"></div><svg class="abs" style="left:24.6px;top:4px" width="7.200" height="9" viewBox="0 0 9 11"><path d="M2.3,5 V3.2 A2.2,2.2 0 0 1 6.7,3.2 V5" fill="none" stroke="#d6d6d6" stroke-width="1.3"/><rect x="0.8" y="4.8" width="7.4" height="5.6" rx="0.8" fill="#d6d6d6"/><rect x="4" y="6.5" width="1" height="2.2" fill="#535353"/></svg><div class="cbar" style="background:#808080"></div><div class="chevr" style="left:45.5px;top:5.5px;border-color:#dcdcdc"></div><div class="thumb" style="left:64.25px;width:13px"><svg width="11" height="13" viewBox="1.5 0 11 13"><rect width="14" height="13" fill="#fff"/><path d="M3,12 V6 A4,4 0 0 1 11,6 V12 H9.5 V8 H8 V12 H6 V8 H4.5 V12 Z" fill="#e58f9a"/></svg></div><div class="nm" style="left:82.3px">亭子</div><div class="abs" style="left:171.5px;top:0;width:1px;height:17.73px;background:#474747"></div><div class="circ"></div></div><div class="row" style="top:181.84px;"><svg class="abs" style="left:4.6px;top:4.6px" width="11" height="7.600" viewBox="0 0 13 9"><path d="M0.6,4.5 C2.6,1.2 4.6,0.7 6.5,0.7 C8.4,0.7 10.4,1.2 12.4,4.5 C10.4,7.8 8.4,8.3 6.5,8.3 C4.6,8.3 2.6,7.8 0.6,4.5 Z" fill="#cdcdcd"/><circle cx="6.5" cy="4.5" r="2.7" fill="#535353"/><circle cx="6.5" cy="4.5" r="1.5" fill="#d6d6d6"/></svg><div class="abs" style="left:17px;top:0;width:1px;height:17.73px;background:#454545"></div><svg class="abs" style="left:24.6px;top:4px" width="7.200" height="9" viewBox="0 0 9 11"><path d="M2.3,5 V3.2 A2.2,2.2 0 0 1 6.7,3.2 V5" fill="none" stroke="#d6d6d6" stroke-width="1.3"/><rect x="0.8" y="4.8" width="7.4" height="5.6" rx="0.8" fill="#d6d6d6"/><rect x="4" y="6.5" width="1" height="2.2" fill="#535353"/></svg><div class="cbar" style="background:#2ee6e6"></div><div class="chevr" style="left:45.5px;top:5.5px;border-color:#dcdcdc"></div><div class="thumb" style="left:63px;width:15.5px"><svg width="14" height="13" viewBox="0 0 14 13"><rect width="14" height="13" fill="#fff"/><path d="M3,11 L5,3 L7,8 L9,2 L11,6 L10,12 L6,10 Z" fill="#a58fd0"/><path d="M4,6 L8,9 L6,12 Z" fill="#6d8fd0"/></svg></div><div class="nm" style="left:82.3px">建筑整体</div><div class="abs" style="left:171.5px;top:0;width:1px;height:17.73px;background:#474747"></div><div class="circ"></div></div><div class="row" style="top:199.57px;"><svg class="abs" style="left:4.6px;top:4.6px" width="11" height="7.600" viewBox="0 0 13 9"><path d="M0.6,4.5 C2.6,1.2 4.6,0.7 6.5,0.7 C8.4,0.7 10.4,1.2 12.4,4.5 C10.4,7.8 8.4,8.3 6.5,8.3 C4.6,8.3 2.6,7.8 0.6,4.5 Z" fill="#cdcdcd"/><circle cx="6.5" cy="4.5" r="2.7" fill="#535353"/><circle cx="6.5" cy="4.5" r="1.5" fill="#d6d6d6"/></svg><div class="abs" style="left:17px;top:0;width:1px;height:17.73px;background:#454545"></div><svg class="abs" style="left:24.6px;top:4px" width="7.200" height="9" viewBox="0 0 9 11"><path d="M2.3,5 V3.2 A2.2,2.2 0 0 1 6.7,3.2 V5" fill="none" stroke="#d6d6d6" stroke-width="1.3"/><rect x="0.8" y="4.8" width="7.4" height="5.6" rx="0.8" fill="#d6d6d6"/><rect x="4" y="6.5" width="1" height="2.2" fill="#535353"/></svg><div class="cbar" style="background:#5a2ed2"></div><div class="chevr" style="left:45.5px;top:5.5px;border-color:#dcdcdc"></div><div class="thumb" style="left:63px;width:15.5px"><svg width="14" height="13" viewBox="0 0 14 13"><rect width="14" height="13" fill="#fdfdfd"/><rect x="2" y="6" width="1.5" height="1" fill="#cde"/></svg></div><div class="nm" style="left:82.3px">零碎板</div><div class="abs" style="left:171.5px;top:0;width:1px;height:17.73px;background:#474747"></div><div class="circ"></div></div><div class="row" style="top:217.30px;"><svg class="abs" style="left:4.6px;top:4.6px" width="11" height="7.600" viewBox="0 0 13 9"><path d="M0.6,4.5 C2.6,1.2 4.6,0.7 6.5,0.7 C8.4,0.7 10.4,1.2 12.4,4.5 C10.4,7.8 8.4,8.3 6.5,8.3 C4.6,8.3 2.6,7.8 0.6,4.5 Z" fill="#cdcdcd"/><circle cx="6.5" cy="4.5" r="2.7" fill="#535353"/><circle cx="6.5" cy="4.5" r="1.5" fill="#d6d6d6"/></svg><div class="abs" style="left:17px;top:0;width:1px;height:17.73px;background:#454545"></div><svg class="abs" style="left:24.6px;top:4px" width="7.200" height="9" viewBox="0 0 9 11"><path d="M2.3,5 V3.2 A2.2,2.2 0 0 1 6.7,3.2 V5" fill="none" stroke="#d6d6d6" stroke-width="1.3"/><rect x="0.8" y="4.8" width="7.4" height="5.6" rx="0.8" fill="#d6d6d6"/><rect x="4" y="6.5" width="1" height="2.2" fill="#535353"/></svg><div class="cbar" style="background:#22d65f"></div><div class="chevr" style="left:45.5px;top:5.5px;border-color:#dcdcdc"></div><div class="thumb" style="left:63px;width:15.5px"><svg width="14" height="13" viewBox="0 0 14 13"><rect width="14" height="13" fill="#fff"/><polygon points="7,3 13,6.5 7,10 1,6.5" fill="#a9dfe0"/><polygon points="1,6.5 7,10 13,6.5 13,8 7,11.5 1,8" fill="#79c5c9"/></svg></div><div class="nm" style="left:82.3px">底板</div><div class="abs" style="left:171.5px;top:0;width:1px;height:17.73px;background:#474747"></div><div class="circ"></div></div><div class="row" style="top:235.03px;"><svg class="abs" style="left:4.6px;top:4.6px" width="11" height="7.600" viewBox="0 0 13 9"><path d="M0.6,4.5 C2.6,1.2 4.6,0.7 6.5,0.7 C8.4,0.7 10.4,1.2 12.4,4.5 C10.4,7.8 8.4,8.3 6.5,8.3 C4.6,8.3 2.6,7.8 0.6,4.5 Z" fill="#cdcdcd"/><circle cx="6.5" cy="4.5" r="2.7" fill="#535353"/><circle cx="6.5" cy="4.5" r="1.5" fill="#d6d6d6"/></svg><div class="abs" style="left:17px;top:0;width:1px;height:17.73px;background:#454545"></div><svg class="abs" style="left:24.6px;top:4px" width="7.200" height="9" viewBox="0 0 9 11"><path d="M2.3,5 V3.2 A2.2,2.2 0 0 1 6.7,3.2 V5" fill="none" stroke="#d6d6d6" stroke-width="1.3"/><rect x="0.8" y="4.8" width="7.4" height="5.6" rx="0.8" fill="#d6d6d6"/><rect x="4" y="6.5" width="1" height="2.2" fill="#535353"/></svg><div class="cbar" style="background:#e620e6"></div><div class="chevr" style="left:45.5px;top:5.5px;border-color:#dcdcdc"></div><div class="thumb" style="left:65.25px;width:11px"><svg width="14" height="13" viewBox="0 0 14 13"><rect width="14" height="13" fill="#c5dff0"/></svg></div><div class="nm" style="left:82.3px">背景</div><div class="abs" style="left:171.5px;top:0;width:1px;height:17.73px;background:#474747"></div><div class="circ"></div></div><div class="abs" style="left:5px;top:566px;width:203px;height:46px;background:#474747;border:1px solid #4f4f4f"></div><svg class="abs" style="left:88px;top:566px" width="118" height="40" viewBox="0 0 118 40"><g fill="none" stroke="#3f6fb3" stroke-width="2.2" opacity=".8"><circle cx="16" cy="16" r="9.6"/><path d="M12.3,12 V16 A3.7,3.7 0 0 0 19.7,16 V12" stroke-width="1.8"/><path d="M16,20 V27" stroke-width="1.8"/><path d="M11.5,28 H20.5 M12.5,31 H19.5 M14,34 H18" stroke-width="1.6"/></g><text x="33.500" y="24.300" font-size="20.500" fill="#3f6fb3" stroke="#3f6fb3" stroke-width=".55" opacity=".8" font-family="Liberation Sans, sans-serif" textLength="72" lengthAdjust="spacing">UIIIUIII</text><text x="36.500" y="32.800" font-size="5.500" fill="#3f6fb3" opacity=".65" font-family="Noto Sans CJK SC, sans-serif" textLength="66" lengthAdjust="spacing">优秀网页设计联盟</text></svg><div class="abs" style="left:0;top:613px;width:212px;height:7px;background:#535353;border-top:1px solid #3d3d3d;overflow:hidden"><div class="t" style="left:7px;top:1.5px;font-size:11px;color:#e0e0e0">13<span style="position:relative;top:6px"> 图层</span></div><div class="abs" style="left:70px;top:3px;width:9px;height:8px;border:1.3px solid #cfcfcf"></div><div class="abs" style="left:93px;top:2.5px;width:10px;height:10px;border:1.3px solid #cfcfcf;border-radius:50%"></div><div class="abs" style="left:113px;top:3px;width:9px;height:8px;border:1.3px solid #777"></div><div class="abs" style="left:134px;top:3.5px;width:12px;height:8px;background:#6d6d6d"></div><div class="abs" style="left:157px;top:3px;width:10px;height:9px;background:#dadada"></div><div class="abs" style="left:179px;top:3.5px;width:9px;height:9px;border:1.3px solid #cfcfcf;border-top-width:2px"></div></div></div><div id="dlg" class="abs"><div id="dlgt" class="abs"><div class="t" style="left:211.5px;top:3.5px;font-size:11.5px;color:#2b2b2b;margin-top:1px">拾色器</div></div><div class="lab" style="left:12.5px;top:32.5px;font-size:11px">选择颜色:</div><div class="abs" style="left:12.5px;top:52.3px;width:214.6px;height:215px;background:linear-gradient(to bottom,rgba(0,0,0,0) 0%,rgba(0,0,0,.13) 25%,rgba(0,0,0,.39) 50%,rgba(0,0,0,.71) 75%,rgba(0,0,0,.98) 100%),linear-gradient(to right,#ff6f6c 0%,#f4fb6e 16%,#9aee5a 25%,#19dd48 33%,#18e27a 41%,#2ffbee 50%,#3f98ee 57%,#6b5fe0 65%,#a35ae2 73%,#fd54e0 84%,#ff5eae 92%,#ff6a78 100%)"></div><div class="abs" style="left:132.4px;top:121.2px;width:9px;height:9px;border-radius:50%;border:1.2px solid #e8e8e8"></div><div class="abs" style="left:243.8px;top:52.3px;width:20.8px;height:215px;background:linear-gradient(#0051ab 0%,#075ab0 22%,#3b7ab8 48%,#7b9dc0 72%,#b1b1b1 100%)"></div><div class="abs" style="left:237.500px;top:156.700px;width:0;height:0;border-top:3.500px solid transparent;border-bottom:3.500px solid transparent;border-left:5px solid #c6c6c6"></div><div class="abs" style="left:266px;top:156.700px;width:0;height:0;border-top:3.500px solid transparent;border-bottom:3.500px solid transparent;border-right:5px solid #c6c6c6"></div><div class="abs" style="left:281px;top:48.3px;width:51.5px;height:67px;background:#4a7aae;border:1.3px solid #111"></div><svg class="abs" style="left:344.5px;top:87.5px" width="12" height="13" viewBox="0 0 12 13"><g fill="none" stroke="#c9c9c9" stroke-width="1"><path d="M6,1 L11,3.7 V9.3 L6,12 L1,9.3 V3.7 Z"/><path d="M1,3.7 L6,6.4 L11,3.7 M6,6.4 V12"/></g></svg><div class="abs" style="left:344.8px;top:104px;width:13.5px;height:13.5px;background:#6a5a9b;border:1px solid #d6d6d6"></div><div class="btn" style="top:48.3px;border-width:2px;line-height:19.500px">确定</div><div class="btn" style="top:73.3px;height:21px;line-height:20px">取消</div><div class="btn" style="top:97.7px;height:21px;line-height:20px">颜色色板</div><div class="radio" style="left:281.2px;top:130.9px;"></div><div class="lab" style="left:296px;top:130.2px">H:</div><div class="inp" style="left:311.5px;top:128.0px;width:53px"><span>210°</span></div><div class="radio" style="left:281.2px;top:151.9px;background:radial-gradient(circle,#3a3a3a 0 1.9px,#e6e6e6 2.2px)"></div><div class="lab" style="left:296px;top:151.2px">S:</div><div class="inp" style="left:311.5px;top:149.1px;width:53px"><span>50%</span></div><div class="radio" style="left:281.2px;top:173.0px;"></div><div class="lab" style="left:296px;top:172.3px">B:</div><div class="inp" style="left:311.5px;top:170.1px;width:53px"><span>66%</span></div><div class="radio" style="left:281.2px;top:194.0px;"></div><div class="lab" style="left:296px;top:193.3px">R:</div><div class="inp" style="left:311.5px;top:191.2px;width:53px"><span>83</span></div><div class="radio" style="left:281.2px;top:215.1px;"></div><div class="lab" style="left:296px;top:214.4px">G:</div><div class="inp" style="left:311.5px;top:212.2px;width:53px"><span>124</span></div><div class="radio" style="left:281.2px;top:236.1px;"></div><div class="lab" style="left:296px;top:235.4px">B:</div><div class="inp" style="left:311.5px;top:233.2px;width:53px"><span>169</span></div><div class="lab" style="left:360px;width:29.800px;text-align:right;top:193.3px">C:</div><div class="inp" style="left:392.4px;top:191.2px;width:54px"><span>72%</span></div><div class="lab" style="left:360px;width:29.800px;text-align:right;top:214.4px">M:</div><div class="inp" style="left:392.4px;top:212.2px;width:54px"><span>46%</span></div><div class="lab" style="left:360px;width:29.800px;text-align:right;top:235.4px">Y:</div><div class="inp" style="left:392.4px;top:233.2px;width:54px"><span>18%</span></div><div class="lab" style="left:360px;width:29.800px;text-align:right;top:256.5px">K:</div><div class="inp" style="left:392.4px;top:254.3px;width:54px"><span>0%</span></div><div class="lab" style="left:282px;top:256.5px;color:#d8d8d8">#</div><div class="abs" style="left:293.800px;top:255.0px;width:72.500px;height:15px;background:#fff;border:1px solid #7db1ec;border-radius:2px;box-shadow:0 0 0 1.5px #5b9be6"><div class="abs" style="left:2.500px;top:.5px;width:40px;height:12px;background:#b3d4fb"></div><div class="t" style="left:3px;top:1px;font-size:11px;color:#2a6fc6">537ca9</div></div><div class="abs" style="left:13.2px;top:280.6px;width:9.5px;height:9.5px;border:1.2px solid #dcdcdc;border-radius:1.5px"></div><div class="lab" style="left:27.5px;top:279.5px;font-size:11.5px">仅限 Web 颜色</div></div></body></html>
